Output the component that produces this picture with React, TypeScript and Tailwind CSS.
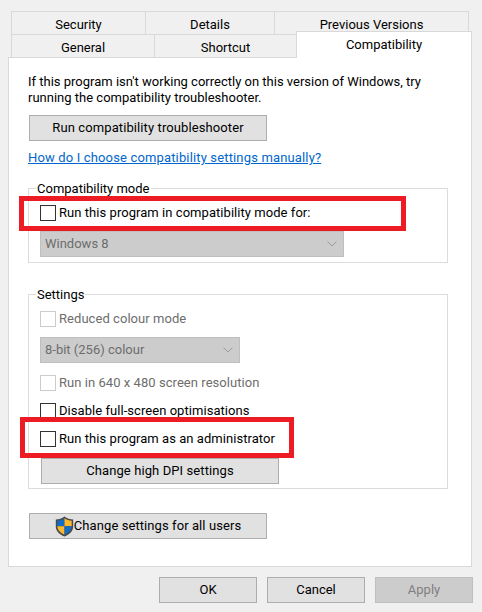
import React from 'react';

function Checkbox({ label, disabled = false }: { label: string; disabled?: boolean }) {
  return (
    <div className="flex items-center h-[16px]">
      <span className={`block w-[16px] h-[16px] border bg-white ${disabled ? 'border-[#cccccc]' : 'border-[#333333]'}`} />
      <span className={`ml-[3px] whitespace-nowrap tracking-[0.05px] ${disabled ? 'text-[#6d6d6d]' : 'text-black'}`}>{label}</span>
    </div>
  );
}

function DisabledSelect({ value, width }: { value: string; width: string }) {
  return (
    <div className={`flex items-center justify-between h-[26px] pl-[4px] pr-[6px] bg-[#cccccc] border border-[#bfbfbf] text-[#6d6d6d] ${width}`}>
      <span>{value}</span>
      <svg width="10" height="6" viewBox="0 0 10 6" fill="none" stroke="#9a9a9a" strokeWidth="1">
        <path d="M0.5 0.5L5 5L9.5 0.5" />
      </svg>
    </div>
  );
}

function Shield() {
  return (
    <svg width="19" height="21" viewBox="0 0 19 21" className="shrink-0">
      <path d="M9.5 0.5C7 2.5 4 3.4 0.8 3.4V10.5C0.8 15 4.5 18.6 9.5 20.5C14.5 18.6 18.2 15 18.2 10.5V3.4C15 3.4 12 2.5 9.5 0.5Z" fill="#4a4a4a" />
      <path d="M9.5 2.2C7.5 3.7 5 4.5 2.3 4.7V10.3H9.5Z" fill="#0f6fc6" />
      <path d="M9.5 2.2C11.5 3.7 14 4.5 16.7 4.7V10.3H9.5Z" fill="#fbb82f" />
      <path d="M2.3 10.3H9.5V18.6C5.5 17 2.6 14.2 2.3 10.3Z" fill="#fbb82f" />
      <path d="M16.7 10.3H9.5V18.6C13.5 17 16.4 14.2 16.7 10.3Z" fill="#0f6fc6" />
    </svg>
  );
}

export default function App() {
  const btn = 'flex items-center justify-center h-[26px] bg-[#e1e1e1] border border-[#adadad] text-black';

  return (
    <div className="relative w-[482px] h-[612px] overflow-hidden bg-[#f0f0f0] text-[13px] leading-[16px] text-black font-['Roboto','Open_Sans',sans-serif]">
      {/* tab rows */}
      <div className="pt-[11px] pl-[11px]">
        <div className="flex w-[458px] h-[23px] text-center leading-[25px] border-t border-l border-r border-[#d9d9d9]">
          <div className="w-[134px] border-r border-[#d9d9d9]">Security</div>
          <div className="w-[129px] border-r border-[#d9d9d9]">Details</div>
          <div className="flex-1">Previous Versions</div>
        </div>
        <div className="flex w-[285px] h-[23px] text-center leading-[25px] border-t border-l border-[#d9d9d9]">
          <div className="w-[143px] border-r border-[#d9d9d9]">General</div>
          <div className="flex-1">Shortcut</div>
        </div>
      </div>

      {/* page */}
      <div className="relative ml-[8px] w-[464px] h-[510px] bg-white border border-[#d9d9d9] pl-[19px] pt-[16px]">
        <p className="w-[420px] whitespace-nowrap">
          If this program isn't working correctly on this version of Windows, try
          <br />
          running the compatibility troubleshooter.
        </p>
        <button className={`${btn} w-[238px] ml-[1px] mt-[9px] pb-[1px] tracking-[0.1px]`}>Run compatibility troubleshooter</button>
        <div className="mt-[9px] text-[#0066cc] underline tracking-[0.15px]">How do I choose compatibility settings manually?</div>

        <fieldset className="mt-[14px] w-[420px] h-[83px] border border-[#dcdcdc] px-[11px]">
          <legend className="ml-[-4px] px-[1px] h-[16px] leading-[18px]">Compatibility mode</legend>
          <div className="pt-[9px]">
            <Checkbox label="Run this program in compatibility mode for:" />
            <div className="mt-[10px]">
              <DisabledSelect value="Windows 8" width="w-[304px]" />
            </div>
          </div>
        </fieldset>

        <fieldset className="mt-[23px] w-[420px] h-[203px] border border-[#dcdcdc] px-[11px]">
          <legend className="ml-[-4px] px-[1px] h-[16px] leading-[18px]">Settings</legend>
          <div className="pt-[9px]">
            <Checkbox label="Reduced colour mode" disabled />
            <div className="mt-[10px]">
              <DisabledSelect value="8-bit (256) colour" width="w-[200px]" />
            </div>
            <div className="mt-[12px]">
              <Checkbox label="Run in 640 x 480 screen resolution" disabled />
            </div>
            <div className="mt-[12px]">
              <Checkbox label="Disable full-screen optimisations" />
            </div>
            <div className="mt-[12px]">
              <Checkbox label="Run this program as an administrator" />
            </div>
            <button className={`${btn} w-[238px] ml-[1px] mt-[11px] tracking-[0.1px]`}>Change high DPI settings</button>
          </div>
        </fieldset>

        <button className={`${btn} w-[238px] ml-[1px] mt-[24px]`}>
          <Shield />
          <span className="tracking-[0.08px]">Change settings for all users</span>
        </button>
      </div>

      {/* bottom buttons */}
      <div className="flex justify-end gap-[10px] mt-[10px] pr-[9px]">
        <button className={`${btn} w-[98px]`}>OK</button>
        <button className={`${btn} w-[98px]`}>Cancel</button>
        <button className="flex items-center justify-center w-[98px] h-[26px] bg-[#cccccc] border border-[#bfbfbf] text-[#7f7f7f]">Apply</button>
      </div>

      {/* active tab sits over the rows */}
      <div className="absolute left-[296px] top-[31px] w-[176px] h-[27px] bg-white border-t border-l border-r border-[#d9d9d9] text-center leading-[26px]">
        Compatibility
      </div>

      {/* red annotation boxes */}
      <div className="absolute left-[19px] top-[196px] w-[387px] h-[35px] border-[5px] border-[#ed1c24]" />
      <div className="absolute left-[20px] top-[417px] w-[274px] h-[41px] border-[5px] border-[#ed1c24]" />
    </div>
  );
}
